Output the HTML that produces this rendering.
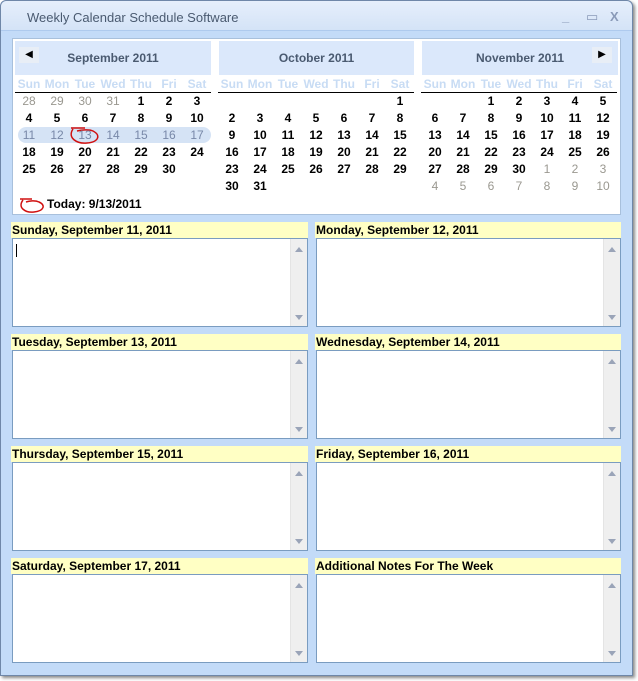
<!DOCTYPE html>
<html><head><meta charset="utf-8"><style>
*{margin:0;padding:0;box-sizing:border-box}
body{width:638px;height:681px;background:#fff;position:relative;overflow:hidden;font-family:"Liberation Sans",Arial,sans-serif}
.win{position:absolute;left:0;top:0;width:633px;height:676px;background:#c3dbf8;border:1px solid #6f87a8;border-radius:6px 6px 0 0;box-shadow:2px 2px 3px #888}
.title{position:absolute;left:0;top:0;width:631px;height:30px;background:linear-gradient(#e6effb,#d4e3f7);border-radius:6px 6px 0 0;border-bottom:1px solid #aecaee}
.title span{position:absolute;left:26px;top:9px;font-size:13px;color:#4a5a70}
.ctl{position:absolute;top:8px;font-size:13px;color:#8a9ab8;font-weight:bold}
.cal{position:absolute;left:12px;top:38px;width:609px;height:177px;background:#fff;border:1px solid #a8c0dc}
.mh{position:absolute;top:2px;height:34px;background:#dbe8fb;font-size:12px;font-weight:bold;color:#4a5a70;text-align:center;line-height:34px}
.nav{position:absolute;top:8px;width:20px;height:16px;background:#e8eef6;font-size:10px;line-height:16px;color:#000;text-align:center}
table{position:absolute;border-collapse:collapse;font-size:12px;font-weight:bold}
td{width:28px;height:17px;text-align:center;padding:0}
tr.dn td{color:#c8dcf4;height:16px;border-bottom:1px solid #000}
.g{color:#9a9890;font-weight:normal}
.hl td{color:#7888a8;font-weight:normal}
.pill{position:absolute;left:5px;top:88px;width:193px;height:16px;background:#d5e3f5;border-radius:8px}
.hd{position:absolute;height:16px;background:#ffffc4;font-size:12px;font-weight:bold;padding-left:1px;line-height:16px}
.ta{position:absolute;height:89px;background:#fff;border:1px solid #7a9cc0}
.sb{position:absolute;right:0;top:0;width:17px;height:100%;background:#efefef;border-left:1px solid #e4e4e4}
.sb:before{content:"";position:absolute;left:4px;top:8px;border:4px solid transparent;border-bottom:5px solid #9aa4b8;border-top:0}
.sb:after{content:"";position:absolute;left:4px;bottom:6px;border:4px solid transparent;border-top:5px solid #9aa4b8;border-bottom:0}
</style></head><body>
<div class="win">
<div class="title"><span>Weekly Calendar Schedule Software</span>
<div class="ctl" style="left:561px">_</div><div class="ctl" style="left:585px;font-weight:normal">▭</div><div class="ctl" style="left:609px">X</div></div>
</div>
<div class="cal">
<div class="mh" style="left:2px;width:196px">September 2011</div>
<div class="nav" style="left:6px">◀</div>
<div class="mh" style="left:206px;width:195px">October 2011</div>
<div class="mh" style="left:409px;width:196px">November 2011</div>
<div class="nav" style="left:579px">▶</div>
<div class="pill"></div>
<svg style="position:absolute;left:56px;top:87px" width="34" height="20"><path d="M2 2 L16 2 M4 3 C-2 12 8 18 18 17 C30 16 32 9 24 5 C20 3 12 4 8 5" fill="none" stroke="#d01010" stroke-width="1.5"/></svg>
<table style="left:2px;top:37px">
<tr class="dn"><td>Sun</td><td>Mon</td><td>Tue</td><td>Wed</td><td>Thu</td><td>Fri</td><td>Sat</td></tr>
<tr><td class="g">28</td><td class="g">29</td><td class="g">30</td><td class="g">31</td><td>1</td><td>2</td><td>3</td></tr>
<tr><td>4</td><td>5</td><td>6</td><td>7</td><td>8</td><td>9</td><td>10</td></tr>
<tr class="hl"><td>11</td><td>12</td><td>13</td><td>14</td><td>15</td><td>16</td><td>17</td></tr>
<tr><td>18</td><td>19</td><td>20</td><td>21</td><td>22</td><td>23</td><td>24</td></tr>
<tr><td>25</td><td>26</td><td>27</td><td>28</td><td>29</td><td>30</td><td></td></tr>
<tr><td></td><td></td><td></td><td></td><td></td><td></td><td></td></tr>
</table>
<table style="left:205px;top:37px">
<tr class="dn"><td>Sun</td><td>Mon</td><td>Tue</td><td>Wed</td><td>Thu</td><td>Fri</td><td>Sat</td></tr>
<tr><td></td><td></td><td></td><td></td><td></td><td></td><td>1</td></tr>
<tr><td>2</td><td>3</td><td>4</td><td>5</td><td>6</td><td>7</td><td>8</td></tr>
<tr><td>9</td><td>10</td><td>11</td><td>12</td><td>13</td><td>14</td><td>15</td></tr>
<tr><td>16</td><td>17</td><td>18</td><td>19</td><td>20</td><td>21</td><td>22</td></tr>
<tr><td>23</td><td>24</td><td>25</td><td>26</td><td>27</td><td>28</td><td>29</td></tr>
<tr><td>30</td><td>31</td><td></td><td></td><td></td><td></td><td></td></tr>
</table>
<table style="left:408px;top:37px">
<tr class="dn"><td>Sun</td><td>Mon</td><td>Tue</td><td>Wed</td><td>Thu</td><td>Fri</td><td>Sat</td></tr>
<tr><td></td><td></td><td>1</td><td>2</td><td>3</td><td>4</td><td>5</td></tr>
<tr><td>6</td><td>7</td><td>8</td><td>9</td><td>10</td><td>11</td><td>12</td></tr>
<tr><td>13</td><td>14</td><td>15</td><td>16</td><td>17</td><td>18</td><td>19</td></tr>
<tr><td>20</td><td>21</td><td>22</td><td>23</td><td>24</td><td>25</td><td>26</td></tr>
<tr><td>27</td><td>28</td><td>29</td><td>30</td><td class="g">1</td><td class="g">2</td><td class="g">3</td></tr>
<tr><td class="g">4</td><td class="g">5</td><td class="g">6</td><td class="g">7</td><td class="g">8</td><td class="g">9</td><td class="g">10</td></tr>
</table>
<svg style="position:absolute;left:5px;top:157px" width="30" height="20"><path d="M2 3 L14 3 M5 4 C-1 12 8 17 16 16 C26 15 28 9 21 6 C17 4 11 5 8 6" fill="none" stroke="#d01010" stroke-width="1.5"/></svg>
<div style="position:absolute;left:34px;top:158px;font-size:12px;font-weight:bold">Today: 9/13/2011</div>
</div>

<div class="hd" style="left:11px;top:222px;width:297px">Sunday, September 11, 2011</div>
<div class="ta" style="left:12px;top:238px;width:296px"><div style="position:absolute;left:3px;top:5px;width:1px;height:13px;background:#000"></div><div class="sb"></div></div>
<div class="hd" style="left:315px;top:222px;width:306px">Monday, September 12, 2011</div>
<div class="ta" style="left:316px;top:238px;width:305px"><div class="sb"></div></div>

<div class="hd" style="left:11px;top:334px;width:297px">Tuesday, September 13, 2011</div>
<div class="ta" style="left:12px;top:350px;width:296px"><div class="sb"></div></div>
<div class="hd" style="left:315px;top:334px;width:306px">Wednesday, September 14, 2011</div>
<div class="ta" style="left:316px;top:350px;width:305px"><div class="sb"></div></div>

<div class="hd" style="left:11px;top:446px;width:297px">Thursday, September 15, 2011</div>
<div class="ta" style="left:12px;top:462px;width:296px"><div class="sb"></div></div>
<div class="hd" style="left:315px;top:446px;width:306px">Friday, September 16, 2011</div>
<div class="ta" style="left:316px;top:462px;width:305px"><div class="sb"></div></div>

<div class="hd" style="left:11px;top:558px;width:297px">Saturday, September 17, 2011</div>
<div class="ta" style="left:12px;top:574px;width:296px"><div class="sb"></div></div>
<div class="hd" style="left:315px;top:558px;width:306px">Additional Notes For The Week</div>
<div class="ta" style="left:316px;top:574px;width:305px"><div class="sb"></div></div>
</body></html>
